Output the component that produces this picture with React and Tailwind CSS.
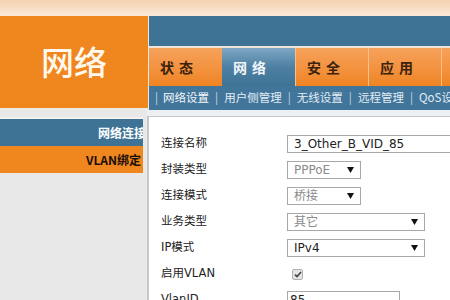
import React from 'react';

const tabs = [
  { label: '状态', active: false },
  { label: '网络', active: true },
  { label: '安全', active: false },
  { label: '应用', active: false },
  { label: '', active: false },
];

const subnav = ['网络设置', '用户侧管理', '无线设置', '远程管理', 'QoS设置'];

const Arrow = () => (
  <svg width="7" height="6" viewBox="0 0 7 6" className="shrink-0">
    <path d="M0 0 L7 0 L3.5 6 Z" fill="#111" />
  </svg>
);

const SelectBox = ({ value, width, muted }) => (
  <div
    className={`flex h-[18px] items-center justify-between border border-[#a8a8a8] bg-white pl-[6px] pr-[6px] ${width}`}
  >
    <span className={muted ? 'text-[#8a8a8a]' : 'text-[#222]'}>{value}</span>
    <Arrow />
  </div>
);

const Row = ({ label, children }) => (
  <div className="flex h-[26px] items-center">
    <div className="w-[126px] shrink-0 text-[11.5px] text-[#222]">{label}</div>
    {children}
  </div>
);

export default function App() {
  return (
    <div
      className="flex h-[300px] w-[450px] flex-col overflow-hidden bg-[#e8e8e8]"
      style={{ fontFamily: '"DejaVu Sans", "Noto Sans CJK SC", sans-serif' }}
    >
      {/* top band */}
      <div className="h-[16px] shrink-0 bg-gradient-to-b from-[#f5d2b0] to-[#fbe9d9]" />

      {/* header */}
      <div className="flex h-[94px] shrink-0">
        <div className="flex w-[148px] shrink-0 flex-col bg-[#efeae6]">
          <div className="flex h-[92px] items-center justify-center bg-[#f0861e]">
            <span className="text-[33px] font-medium text-[#fff8ee]" style={{ fontFamily: '"Noto Sans CJK SC", sans-serif' }}>
              网络
            </span>
          </div>
        </div>
        <div className="ml-[1px] flex flex-1 flex-col">
          <div className="h-[30px] bg-[#3e7396]" />
          <div className="h-[2px] bg-[#f1e4d6]" />
          <div className="flex h-[38px] bg-[#f08a2a]" style={{ fontFamily: '"Noto Sans CJK SC", sans-serif' }}>
            {tabs.map((t, i) => (
              <div
                key={i}
                className={`flex w-[73px] shrink-0 items-center pl-[11px] text-[14px] font-bold tracking-[5px] ${
                  t.active
                    ? 'bg-gradient-to-b from-[#7ea7c4] via-[#4d80a3] to-[#3f7497] text-[#f2f6fa]'
                    : `bg-gradient-to-b from-[#f6a25a] to-[#ef8420] text-[#3a220c] ${i > 0 ? 'border-l border-[#f8c08a]' : ''}`
                }`}
              >
                {t.label}
              </div>
            ))}
          </div>
          <div
            className="flex h-[24px] items-center bg-[#41759a] pl-[6px] text-[11.5px] text-[#e3edf4]"
            style={{ fontFamily: '"Noto Sans CJK SC", sans-serif' }}
          >
            {subnav.map((s, i) => (
              <div key={s} className="flex shrink-0 items-center">
                <span className={`text-[#c8dae6] ${i === 0 ? 'mr-[5px]' : 'mx-[6px]'}`}>|</span>
                <span className={i === 0 ? 'text-[#f4f8fb]' : ''}>{s}</span>
              </div>
            ))}
          </div>
        </div>
      </div>

      {/* body */}
      <div className="flex flex-1">
        <div
          className="flex w-[147px] shrink-0 flex-col pt-[7px]"
          style={{ fontFamily: '"Noto Sans CJK SC", sans-serif' }}
        >
          <div className="h-[2px] w-[143px] bg-[#f4f1ee]" />
          <div className="flex h-[27px] w-[143px] items-center justify-end overflow-hidden bg-[#3e7396] text-[12px] font-bold text-white">
            <span className="-mr-[3px]">网络连接</span>
          </div>
          <div className="flex h-[27px] w-[143px] items-center justify-end bg-[#f0861e] pr-[2px] text-[12px] font-bold text-[#1a1008]">
            VLAN绑定
          </div>
        </div>
        <div className="flex flex-1 flex-col bg-[#ecf0f2] pt-[6px]">
          <div className="flex-1 border-l-2 border-t border-[#c4c8cc] bg-white pl-[12px] pt-[14px] text-[12px]">
            <Row label="连接名称">
              <div className="flex h-[18px] w-[175px] shrink-0 items-center border border-[#a8a8a8] bg-white pl-[6px] text-[#222]">
                3_Other_B_VID_85
              </div>
            </Row>
            <Row label="封装类型">
              <SelectBox value="PPPoE" width="w-[74px]" muted />
            </Row>
            <Row label="连接模式">
              <SelectBox value="桥接" width="w-[74px]" muted />
            </Row>
            <Row label="业务类型">
              <SelectBox value="其它" width="w-[138px]" muted />
            </Row>
            <Row label="IP模式">
              <SelectBox value="IPv4" width="w-[138px]" />
            </Row>
            <Row label="启用VLAN">
              <div className="ml-[5px] flex h-[11px] w-[11px] items-center justify-center rounded-[2px] border border-[#b0b0b0] bg-[#e4e4e4]">
                <svg width="8" height="7" viewBox="0 0 8 7">
                  <path d="M1 3.6 L3 5.6 L7 1" fill="none" stroke="#444" strokeWidth="1.6" />
                </svg>
              </div>
            </Row>
            <Row label="VlanID">
              <div className="flex h-[18px] w-[113px] shrink-0 items-center border border-[#a8a8a8] bg-white pl-[2px] text-[#222]">
                85
              </div>
            </Row>
          </div>
        </div>
      </div>
    </div>
  );
}
